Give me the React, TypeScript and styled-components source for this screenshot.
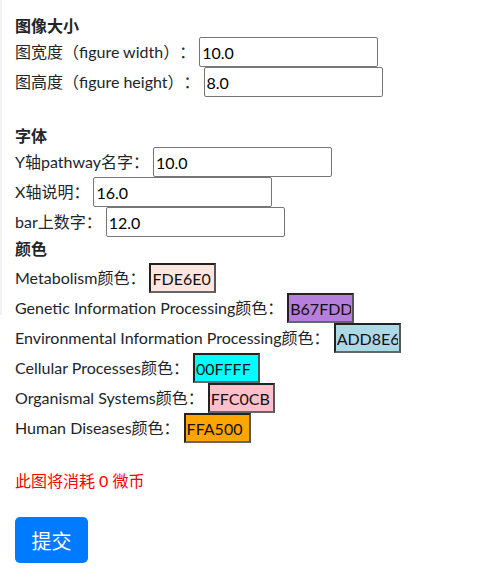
import React from "react";
import styled, { createGlobalStyle } from "styled-components";

const Global = createGlobalStyle`
  html, body {
    margin: 0;
    padding: 0;
    background: #fff;
  }
  body {
    font-family: "Lato", "Noto Sans CJK SC", sans-serif;
    font-size: 16px;
    color: #212529;
    text-spacing-trim: space-all;
    background-image: linear-gradient(#f2f2f2, #f2f2f2);
    background-repeat: no-repeat;
    background-size: 2px 315px;
    background-position: 0 0;
  }
`;

const Page = styled.div`
  padding: 15px 0 0 15px;
  display: flex;
  flex-direction: column;
  align-items: flex-start;
`;

const Heading = styled.div<{ $gap?: number }>`
  font-weight: 700;
  line-height: 22px;
  margin-top: ${(p) => p.$gap ?? 0}px;
`;

const Row = styled.div`
  display: flex;
  align-items: center;
  height: 30px;
  line-height: 22px;
`;

const Label = styled.span`
  white-space: nowrap;
  margin-right: 4px;
  text-spacing-trim: space-all;
`;

const NumInput = styled.input`
  box-sizing: border-box;
  width: 179px;
  height: 30px;
  border: 1px solid #767676;
  border-radius: 2px;
  padding: 1px 2px;
  font: inherit;
  color: #000;
  background: #fff;
`;

const ColorBox = styled.input<{ $bg: string }>`
  box-sizing: border-box;
  width: 67px;
  height: 30px;
  border-style: solid;
  border-width: 2px;
  border-color: #222 #555 #666 #222;
  padding: 0 1px;
  font: inherit;
  color: #111;
  background: ${(p) => p.$bg};
`;

const ColorList = styled.div`
  margin-top: 3px;
  display: flex;
  flex-direction: column;
`;

const Cost = styled.div`
  color: #ff0000;
  line-height: 22px;
  margin-top: 27px;
`;

const Submit = styled.button`
  margin-top: 25px;
  width: 73px;
  height: 46px;
  border: none;
  border-radius: 5px;
  background: #007bff;
  color: #fff;
  font-family: inherit;
  font-size: 20px;
  padding: 0;
  cursor: pointer;
`;

const sizeRows = [
  { label: "图宽度（figure width）：", value: "10.0" },
  { label: "图高度（figure height）：", value: "8.0" },
];

const fontRows = [
  { label: "Y轴pathway名字：", value: "10.0" },
  { label: "X轴说明：", value: "16.0" },
  { label: "bar上数字：", value: "12.0" },
];

const colorRows = [
  { label: "Metabolism颜色：", value: "FDE6E0" },
  { label: "Genetic Information Processing颜色：", value: "B67FDD" },
  { label: "Environmental Information Processing颜色：", value: "ADD8E6" },
  { label: "Cellular Processes颜色：", value: "00FFFF" },
  { label: "Organismal Systems颜色：", value: "FFC0CB" },
  { label: "Human Diseases颜色：", value: "FFA500" },
];

export default function App() {
  return (
    <>
      <Global />
      <Page>
        <Heading>图像大小</Heading>
        {sizeRows.map((r) => (
          <Row key={r.label}>
            <Label>{r.label}</Label>
            <NumInput defaultValue={r.value} />
          </Row>
        ))}
        <Heading $gap={28}>字体</Heading>
        {fontRows.map((r) => (
          <Row key={r.label}>
            <Label>{r.label}</Label>
            <NumInput defaultValue={r.value} />
          </Row>
        ))}
        <Heading $gap={1}>颜色</Heading>
        <ColorList>
          {colorRows.map((r) => (
            <Row key={r.label}>
              <Label>{r.label}</Label>
              <ColorBox $bg={"#" + r.value} defaultValue={r.value} />
            </Row>
          ))}
        </ColorList>
        <Cost>此图将消耗 0 微币</Cost>
        <Submit>提交</Submit>
      </Page>
    </>
  );
}
